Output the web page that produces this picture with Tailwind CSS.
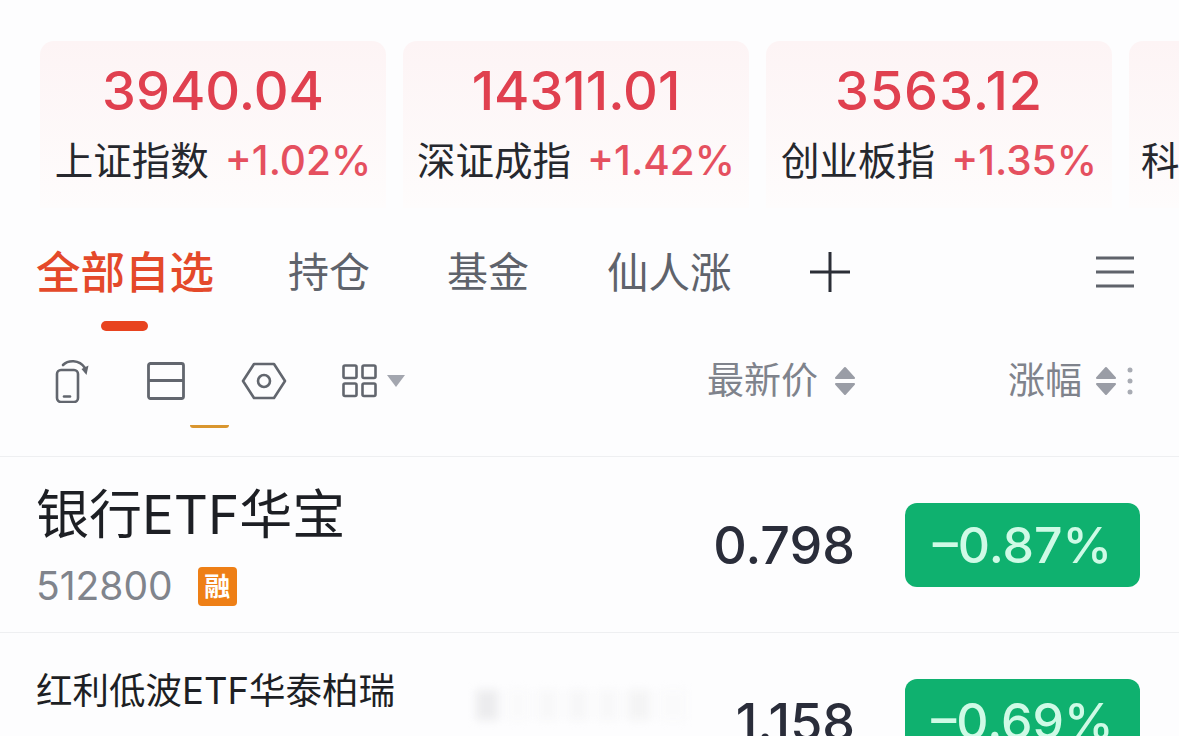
<!DOCTYPE html>
<html lang="zh">
<head>
<meta charset="utf-8">
<script src="https://cdn.jsdelivr.net/npm/@tailwindcss/browser@4"></script>
</head>
<body class="bg-[#fdfdfe]">
<div class="relative w-[1179px] h-[736px] overflow-hidden font-['Inter','Noto_Sans_CJK_SC',sans-serif]">
  <!-- index cards -->
  <div class="flex gap-[17px] pl-[40px] pt-[41px] h-[213px] overflow-hidden">
    <div class="w-[346px] h-[167px] shrink-0 rounded-t-[14px] bg-gradient-to-b from-[#fdf4f5] to-[#fefcfc] flex flex-col items-center">
      <div class="text-[54px] leading-[62px] mt-[19px] font-medium text-[#e0404f]">3940.04</div>
      <div class="flex items-center gap-[16px] mt-[16px] leading-[46px]"><span class="text-[38.500px] text-[#26282e]">上证指数</span><span class="text-[40.500px] font-medium text-[#e5505f]">+1.02%</span></div>
    </div>
    <div class="w-[346px] h-[167px] shrink-0 rounded-t-[14px] bg-gradient-to-b from-[#fdf4f5] to-[#fefcfc] flex flex-col items-center">
      <div class="text-[54px] leading-[62px] mt-[19px] font-medium text-[#e0404f]">14311.01</div>
      <div class="flex items-center gap-[16px] mt-[16px] leading-[46px]"><span class="text-[38.500px] text-[#26282e]">深证成指</span><span class="text-[40.500px] font-medium text-[#e5505f]">+1.42%</span></div>
    </div>
    <div class="w-[346px] h-[167px] shrink-0 rounded-t-[14px] bg-gradient-to-b from-[#fdf4f5] to-[#fefcfc] flex flex-col items-center">
      <div class="text-[54px] leading-[62px] mt-[19px] font-medium tracking-[1px] text-[#e0404f]">3563.12</div>
      <div class="flex items-center gap-[16px] mt-[16px] leading-[46px]"><span class="text-[38.500px] text-[#26282e]">创业板指</span><span class="text-[40.500px] font-medium text-[#e5505f]">+1.35%</span></div>
    </div>
    <div class="w-[346px] h-[167px] shrink-0 rounded-t-[14px] bg-gradient-to-b from-[#fdf4f5] to-[#fefcfc] pl-[12px] pt-[97px]">
      <span class="text-[38.500px] leading-[46px] text-[#26282e]">科创50</span>
    </div>
  </div>
  <!-- tabs -->
  <div class="flex items-center h-[118px] pl-[36px] pr-[44px]">
    <div class="relative w-[178px] text-[44.500px] leading-[118px] pt-[1px] font-medium text-[#e4492a] whitespace-nowrap">全部自选<div class="absolute left-[65px] top-[108px] w-[47px] h-[10px] rounded-full bg-[#e8431f]"></div></div>
    <div class="ml-[74px] pt-[2px] text-[41px] text-[#5f636b] whitespace-nowrap">持仓</div>
    <div class="ml-[77px] pt-[2px] text-[41px] text-[#5f636b] whitespace-nowrap">基金</div>
    <div class="ml-[78px] pt-[2px] text-[41.500px] text-[#5f636b] whitespace-nowrap">仙人涨</div>
    <svg class="ml-[78px]" width="40" height="40" viewBox="0 0 40 40" fill="none" stroke="#2b2e36" stroke-width="3"><path d="M0 20H40M20 0V40"/></svg>
    <svg class="ml-auto" width="40" height="32" viewBox="0 0 40 32" fill="none" stroke="#5f636b" stroke-width="3"><path d="M1 2H39M1 16H39M1 30H39"/></svg>
  </div>
  <!-- toolbar -->
  <div class="flex h-[126px] border-b border-[#eeeff1] items-start">
    <div class="relative flex items-center h-[100px] pl-[55px]">
      <svg width="36" height="44" viewBox="0 0 36 44" fill="none" stroke="#62666e" stroke-width="2.600" stroke-linecap="round"><rect x="2" y="11" width="21" height="32" rx="4"/><path d="M9 37.500H15"/><path d="M8 6C13 1 24 0 30 9"/><path d="M31.500 16L33.500 6.500L26.500 10Z" fill="#62666e" stroke="none"/></svg>
      <svg class="ml-[56px]" width="38" height="38" viewBox="0 0 38 38" fill="none" stroke="#62666e" stroke-width="2.800"><rect x="1.500" y="1.500" width="35" height="35" rx="2"/><path d="M1.500 18.500H36.500"/></svg>
      <svg class="ml-[56px]" width="46" height="38" viewBox="0 0 46 38" fill="none" stroke="#62666e" stroke-width="2.600" stroke-linejoin="round"><path d="M13 2H33L44 19L33 36H13L2 19Z"/><circle cx="23" cy="19" r="6"/></svg>
      <svg class="ml-[55px]" width="36" height="34" viewBox="0 0 36 34" fill="none" stroke="#62666e" stroke-width="2.600"><rect x="1.500" y="1.500" width="13" height="12.500" rx="1.500"/><rect x="20.500" y="1.500" width="13" height="12.500" rx="1.500"/><rect x="1.500" y="19.500" width="13" height="12.500" rx="1.500"/><rect x="20.500" y="19.500" width="13" height="12.500" rx="1.500"/></svg>
      <svg class="ml-[8px]" width="20" height="12" viewBox="0 0 20 12"><path d="M1 0H19L10 12Z" fill="#a3a6af"/></svg>
      <div class="absolute left-[190px] top-[94px] w-[39px] h-[3px] rounded-b bg-[#d9962f]"></div>
    </div>
    <div class="flex-1 flex items-center justify-end h-[100px] text-[37px] text-[#7f838c]">
      <span>最新价</span>
      <svg class="ml-[17px]" width="20" height="30" viewBox="0 0 20 30" fill="#9a9da6" stroke="#9a9da6" stroke-width="2" stroke-linejoin="round"><path d="M10 2L19 12H1ZM10 28L19 18H1Z"/></svg>
      <span class="ml-[153px]">涨幅</span>
      <svg class="ml-[14px]" width="20" height="30" viewBox="0 0 20 30" fill="#9a9da6" stroke="#9a9da6" stroke-width="2" stroke-linejoin="round"><path d="M10 2L19 12H1ZM10 28L19 18H1Z"/></svg>
      <svg class="ml-[11px] mr-[46px]" width="6" height="30" viewBox="0 0 6 30" fill="#a8abb3"><circle cx="3" cy="4" r="2.500"/><circle cx="3" cy="15" r="2.500"/><circle cx="3" cy="26" r="2.500"/></svg>
    </div>
  </div>
  <!-- row 1 -->
  <div class="flex items-center h-[176px] border-b border-[#eeeff1] pl-[36px] pr-[39px]">
    <div class="flex-1 self-start pt-[28px]">
      <div class="text-[53px] leading-[60px] text-[#1d1f24] whitespace-nowrap">银行ETF华宝</div>
      <div class="flex items-center mt-[17px]">
        <span class="text-[39px] leading-[48px] text-[#80848c]">512800</span>
        <span class="ml-[25px] w-[39px] h-[39px] rounded-[4px] bg-[#ee7f16] text-white text-[26px] leading-[39px] text-center font-bold">融</span>
      </div>
    </div>
    <div class="text-[52px] mt-[2px] font-medium text-[#2a2d3a]">0.798</div>
    <div class="ml-[50px] w-[235px] h-[84px] rounded-[12px] bg-[#0fb16f] text-[#cffae6] text-[50px] font-medium leading-[84px] text-center">–0.87%</div>
  </div>
  <!-- row 2 -->
  <div class="flex items-start pl-[36px] pr-[39px] pt-[34px]">
    <div class="flex-1 text-[36.500px] leading-[48px] text-[#1d1f24] whitespace-nowrap">红利低波ETF华泰柏瑞</div>
    <div class="text-[52px] font-medium leading-[60px] mt-[26px] text-[#2a2d3a]">1.158</div>
    <div class="ml-[50px] mt-[12px] w-[235px] h-[84px] rounded-[12px] bg-[#0fb16f] text-[#cffae6] text-[50px] font-medium leading-[84px] text-center shrink-0">–0.69%</div>
  </div>
  <!-- blurred smudge over row 2 -->
  <div class="absolute left-[476px] top-[690px] w-[225px] h-[30px] flex gap-[10px] items-stretch blur-[4px]">
    <div class="w-[22px] bg-[#ececee]"></div>
    <div class="w-[20px] bg-[#fafafb]"></div>
    <div class="w-[20px] bg-[#f8f8f9]"></div>
    <div class="w-[20px] bg-[#f7f7f8]"></div>
    <div class="w-[20px] bg-[#f8f8f9]"></div>
    <div class="w-[22px] bg-[#f4f4f5]"></div>
    <div class="w-[26px] bg-[#fafafb]"></div>
  </div>
</div>
</body>
</html>
